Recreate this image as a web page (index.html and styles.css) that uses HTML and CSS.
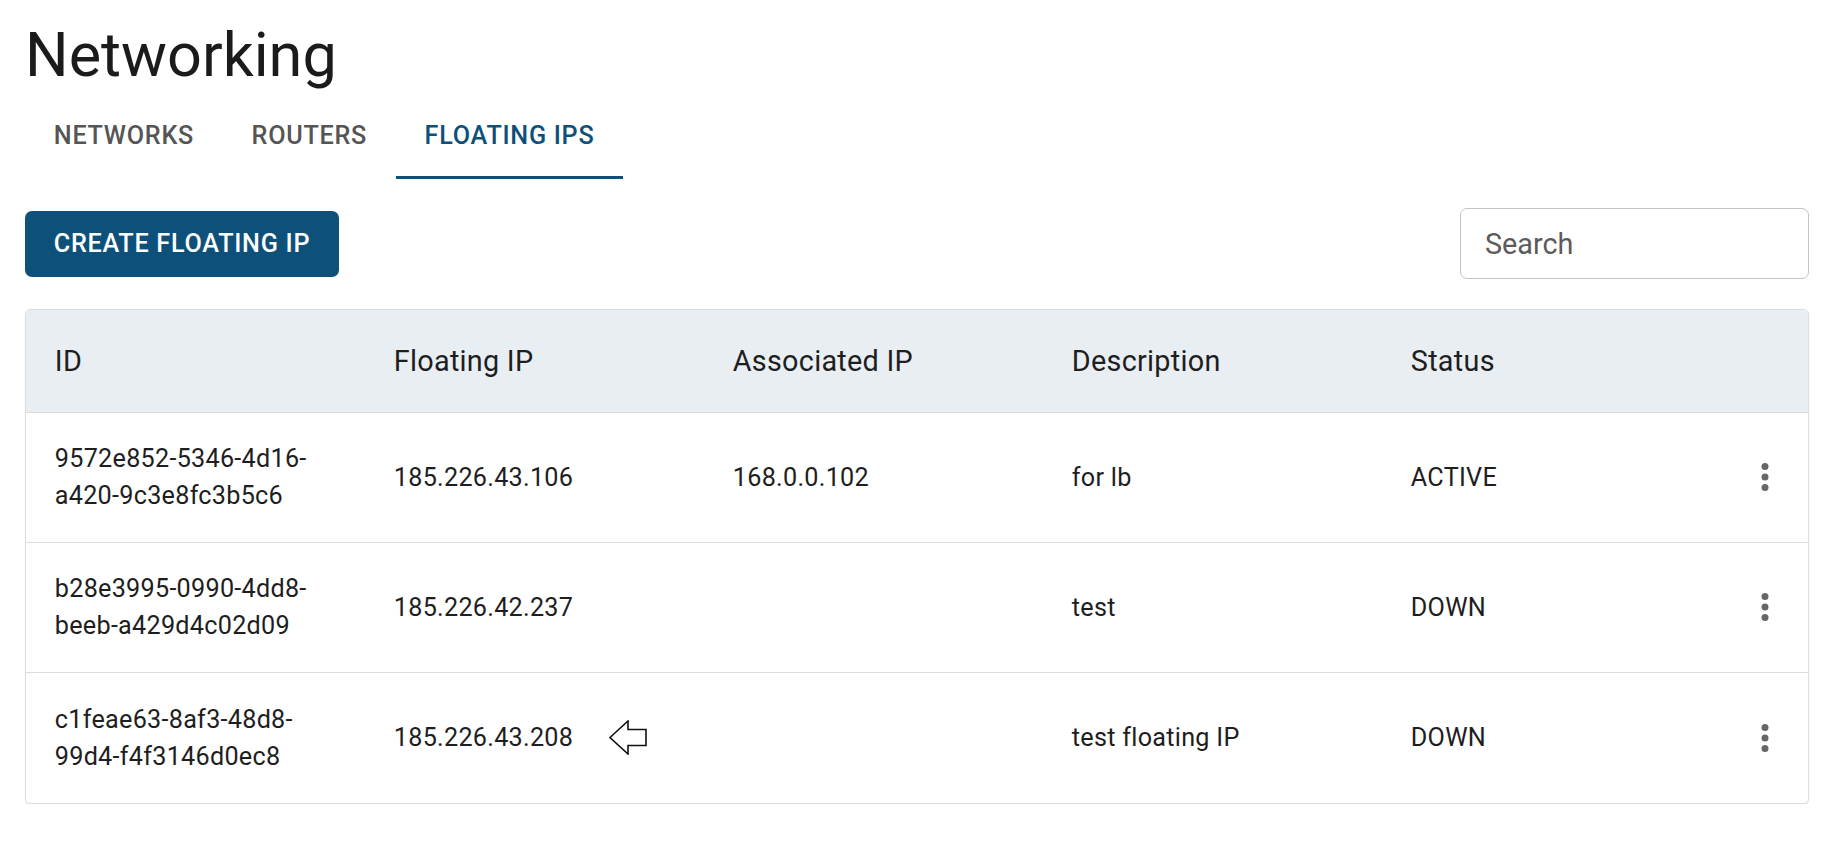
FILE: index.html
```html
<!DOCTYPE html>
<html lang="en">
<head>
<meta charset="utf-8">
<title>Networking</title>
<link rel="stylesheet" href="styles.css">
</head>
<body>
<main class="page">
  <h1 class="title">Networking</h1>
  <nav class="tabs">
    <a class="tab">NETWORKS</a>
    <a class="tab">ROUTERS</a>
    <a class="tab tab-active">FLOATING IPS</a>
  </nav>
  <div class="toolbar">
    <button class="btn-primary">CREATE FLOATING IP</button>
    <input class="search" type="text" placeholder="Search">
  </div>
  <div class="table-wrap">
    <table class="data-table">
      <colgroup>
        <col class="col-main"><col class="col-main"><col class="col-main"><col class="col-main"><col class="col-main"><col>
      </colgroup>
      <thead>
        <tr>
          <th>ID</th>
          <th>Floating IP</th>
          <th>Associated IP</th>
          <th>Description</th>
          <th>Status</th>
          <th></th>
        </tr>
      </thead>
      <tbody>
        <tr>
          <td class="id-cell">9572e852-5346-4d16-a420-9c3e8fc3b5c6</td>
          <td>185.226.43.106</td>
          <td>168.0.0.102</td>
          <td>for lb</td>
          <td>ACTIVE</td>
          <td class="actions"><svg class="kebab" viewBox="0 0 24 24" width="42" height="42"><circle cx="12" cy="6" r="2"/><circle cx="12" cy="12" r="2"/><circle cx="12" cy="18" r="2"/></svg></td>
        </tr>
        <tr>
          <td class="id-cell">b28e3995-0990-4dd8-beeb-a429d4c02d09</td>
          <td>185.226.42.237</td>
          <td></td>
          <td>test</td>
          <td>DOWN</td>
          <td class="actions"><svg class="kebab" viewBox="0 0 24 24" width="42" height="42"><circle cx="12" cy="6" r="2"/><circle cx="12" cy="12" r="2"/><circle cx="12" cy="18" r="2"/></svg></td>
        </tr>
        <tr>
          <td class="id-cell">c1feae63-8af3-48d8-99d4-f4f3146d0ec8</td>
          <td><span class="ip-with-mark">185.226.43.208<svg class="pointer-arrow" viewBox="0 0 38 35" width="38" height="35"><polygon points="1,17.5 19,1 19,9.5 37,9.5 37,25.5 19,25.5 19,34"/></svg></span></td>
          <td></td>
          <td>test floating IP</td>
          <td>DOWN</td>
          <td class="actions"><svg class="kebab" viewBox="0 0 24 24" width="42" height="42"><circle cx="12" cy="6" r="2"/><circle cx="12" cy="12" r="2"/><circle cx="12" cy="18" r="2"/></svg></td>
        </tr>
      </tbody>
    </table>
  </div>
</main>
</body>
</html>
```
FILE: styles.css
```css
* { box-sizing: border-box; }

html, body {
  margin: 0;
  padding: 0;
  background: #ffffff;
}

body {
  font-family: Roboto, "Liberation Sans", Arial, sans-serif;
  color: rgba(0, 0, 0, 0.87);
}

.page {
  padding: 20px 21px 0 25px;
}

.title {
  margin: 0;
  font-size: 61.2px;
  font-weight: 400;
  line-height: 70px;
  color: #1b1b1b;
  letter-spacing: 0;
}

.tabs {
  display: flex;
  margin-top: 5px;
}

.tab {
  display: flex;
  align-items: center;
  height: 84px;
  padding: 0 28.8px;
  font-size: 25.2px;
  font-weight: 500;
  letter-spacing: 0.72px;
  color: #555555;
  border-bottom: 3px solid transparent;
  cursor: pointer;
}

.tab-active {
  color: #0d5079;
  border-bottom-color: #0d5079;
}

.toolbar {
  display: flex;
  align-items: center;
  justify-content: space-between;
  margin-top: 29px;
}

.btn-primary {
  height: 66px;
  padding: 0 28.8px;
  border: none;
  border-radius: 7px;
  background: #0d5079;
  color: #ffffff;
  font-family: Roboto, "Liberation Sans", Arial, sans-serif;
  font-size: 25.2px;
  font-weight: 500;
  letter-spacing: 0.72px;
  cursor: pointer;
}

.search {
  width: 349px;
  height: 71px;
  padding: 0 24px;
  border: 1px solid #c4c4c4;
  border-radius: 7px;
  font-family: Roboto, "Liberation Sans", Arial, sans-serif;
  font-size: 28.8px;
  color: #222;
  outline: none;
}

.search::placeholder {
  color: #5b5b5b;
  opacity: 1;
}

.table-wrap {
  margin-top: 30px;
  border: 1px solid #dcdcdc;
  border-radius: 5px;
  overflow: hidden;
  box-shadow: 0 1px 1px rgba(0, 0, 0, 0.12);
}

.data-table {
  width: 100%;
  border-collapse: collapse;
  table-layout: fixed;
}

.col-main { width: 339px; }

.data-table th {
  height: 102px;
  padding: 0 28.8px;
  background: #e9eef3;
  text-align: left;
  font-size: 28.8px;
  font-weight: 400;
  letter-spacing: 0.27px;
  color: #1e1e1e;
  border-bottom: 1px solid #dcdcdc;
  vertical-align: middle;
}

.data-table td {
  height: 130px;
  padding: 0 28.8px;
  font-size: 25.2px;
  line-height: 37px;
  letter-spacing: 0.27px;
  color: #1e1e1e;
  vertical-align: middle;
  border-bottom: 1px solid #dcdcdc;
}

.data-table tbody tr:last-child td {
  height: 131px;
  border-bottom: none;
}

.data-table td.actions {
  padding: 0;
  text-align: center;
}

.kebab {
  display: block;
  margin: 0 auto;
  fill: #666666;
}

.ip-with-mark {
  display: inline-flex;
  align-items: center;
  gap: 36px;
  white-space: nowrap;
}

.pointer-arrow {
  display: block;
  fill: #ffffff;
  stroke: #111111;
  stroke-width: 1.6;
  stroke-linejoin: miter;
}
```
